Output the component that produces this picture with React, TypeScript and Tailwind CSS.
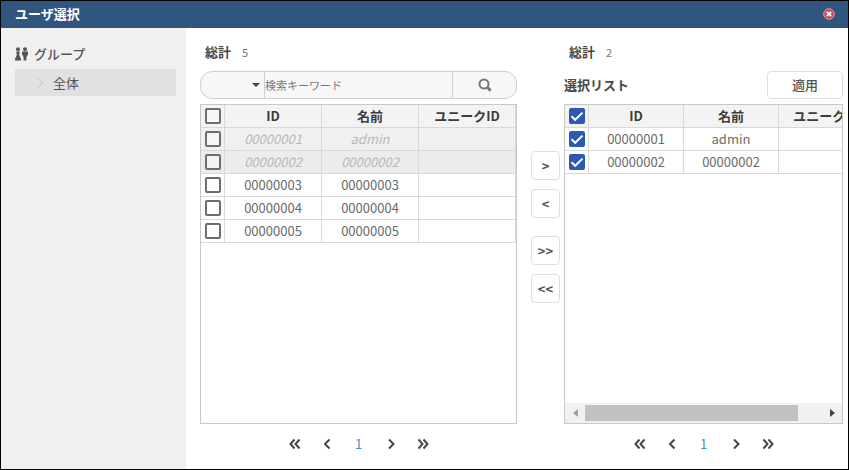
import { useState, type ReactNode } from "react";

type User = { id: string; name: string; unique?: string; assigned?: boolean };

const allUsers: User[] = [
  { id: "00000001", name: "admin", assigned: true },
  { id: "00000002", name: "00000002", assigned: true },
  { id: "00000003", name: "00000003" },
  { id: "00000004", name: "00000004" },
  { id: "00000005", name: "00000005" },
];

const selectedUsers: User[] = [
  { id: "00000001", name: "admin" },
  { id: "00000002", name: "00000002" },
];

function Checkbox({ label, initial }: { label: string; initial: boolean }) {
  const [checked, setChecked] = useState(initial);
  return (
    <span className="grid place-items-center">
      <input
        type="checkbox"
        aria-label={label}
        checked={checked}
        onChange={() => setChecked(!checked)}
        className="peer col-start-1 row-start-1 size-4 appearance-none rounded-xs border-2 border-[#6e6e6e] bg-white/40 checked:border-[#2a5ab4] checked:bg-[#2a5ab4]"
      />
      <svg
        viewBox="0 0 16 16"
        className="pointer-events-none col-start-1 row-start-1 hidden size-4 peer-checked:block"
        fill="none"
        stroke="#fff"
        strokeWidth="2"
      >
        <path d="M2.5 8.2 6.2 11.8 13.5 4.6" />
      </svg>
    </span>
  );
}

function UserTable({ users, checked, className }: { users: User[]; checked: boolean; className: string }) {
  return (
    <table className={`table-fixed border-separate border-spacing-0 text-center ${className}`}>
      <colgroup>
        <col className="w-6" />
        <col />
        <col />
        <col />
      </colgroup>
      <thead>
        <tr className="h-[23px] bg-[#f3f3f3] text-[#3c3c3c]">
          <th className="border-r border-b border-[#d9d9d9] p-0">
            <Checkbox label="すべて選択" initial={checked} />
          </th>
          <th className="border-r border-b border-[#d9d9d9] p-0 font-bold">ID</th>
          <th className="border-r border-b border-[#d9d9d9] p-0 font-bold">名前</th>
          <th className="border-r border-b border-[#d9d9d9] p-0 font-bold whitespace-nowrap">ユニークID</th>
        </tr>
      </thead>
      <tbody>
        {users.map((u) => (
          <tr
            key={u.id}
            className={`h-[23px] ${
              u.assigned ? "text-[#b8b8b8] italic odd:bg-[#f1f0f0] even:bg-[#ececec]" : "bg-white text-[#6a6a6a]"
            }`}
          >
            <td className="border-r border-b border-[#d9d9d9] p-0">
              <Checkbox label={u.id} initial={checked} />
            </td>
            <td className="border-r border-b border-[#d9d9d9] p-0">{u.id}</td>
            <td className="border-r border-b border-[#d9d9d9] p-0">{u.name}</td>
            <td className="border-r border-b border-[#d9d9d9] p-0">{u.unique}</td>
          </tr>
        ))}
      </tbody>
    </table>
  );
}

function PageButton({ label, d }: { label: string; d: string }) {
  return (
    <button type="button" aria-label={label} className="grid size-8 place-items-center text-[#484848]">
      <svg viewBox="0 0 12 12" className="size-3" fill="none" stroke="currentColor" strokeWidth="2">
        <path d={d} />
      </svg>
    </button>
  );
}

function Pager() {
  return (
    <nav className="mt-1 flex h-8 shrink-0 items-center justify-center">
      <PageButton label="最初" d="M5.500 1.500 1.500 6 5.500 10.500M10.500 1.500 6.500 6 10.500 10.500" />
      <PageButton label="前へ" d="M8.500 1.500 4 6 8.500 10.500" />
      <button type="button" aria-current="page" className="size-8 text-[#3f92c6]">
        1
      </button>
      <PageButton label="次へ" d="M4 1.500 8.500 6 4 10.500" />
      <PageButton label="最後" d="M1.500 1.500 5.500 6 1.500 10.500M6.500 1.500 10.500 6 6.500 10.500" />
    </nav>
  );
}

function Total({ count }: { count: number }) {
  return (
    <p className="flex h-5 items-center gap-[11px] pl-[5px] text-[#484848]">
      <span className="font-bold">総計</span>
      <span className="text-[11px] text-[#777]">{count}</span>
    </p>
  );
}

function MoveButton({ label, children, className = "" }: { label: string; children: ReactNode; className?: string }) {
  return (
    <button
      type="button"
      aria-label={label}
      className={`h-[29px] w-[29px] rounded border border-[#dedede] bg-white font-bold text-[#555] ${className}`}
    >
      {children}
    </button>
  );
}

export default function App() {
  return (
    <div className="flex h-screen flex-col border border-black bg-white font-['Noto_Sans_CJK_JP',sans-serif] text-[13px] leading-5 text-[#555]">
      <header className="flex h-[27px] shrink-0 items-center justify-between bg-[#30557f] pr-[13px] pb-px pl-[14px] text-white">
        <h1 className="font-bold">ユーザ選択</h1>
        <button type="button" aria-label="閉じる">
          <svg viewBox="0 0 12 12" className="size-3">
            <circle cx="6" cy="6" r="5.3" fill="#cf4a50" stroke="#dd9aa2" strokeWidth="1" />
            <path d="M3.8 3.8 8.2 8.2M8.2 3.8 3.8 8.2" stroke="#fff" strokeWidth="1.8" />
          </svg>
        </button>
      </header>

      <div className="flex min-h-0 flex-1">
        <aside className="w-[185px] shrink-0 bg-[#f1f0ef] pt-4 pr-[10px] pl-[14px]">
          <h2 className="flex items-center gap-[6px] font-medium">
            <svg viewBox="0 0 13 14" className="h-[14px] w-[13px]" fill="#555">
              <circle cx="3" cy="2.3" r="2" />
              <path d="M1.2 4.6h3.6L4.2 8 6 12v1.5H0V12l1.8-4z" />
              <circle cx="10" cy="2.3" r="2" />
              <path d="M7 4.6h6v2.6l-1.6 3v3.3H8.6v-3.3L7 7.200z" />
            </svg>
            <span>グループ</span>
          </h2>
          <a href="#all" className="mt-[5px] flex h-[27px] items-center gap-2 bg-[#e2e1e0] pl-5">
            <svg viewBox="0 0 10 12" className="h-3 w-[10px]" fill="none" stroke="#bdbdbd" strokeWidth="1">
              <path d="M3 1.500 7.500 6 3 10.500" />
            </svg>
            全体
          </a>
        </aside>

        <main className="flex min-w-0 flex-1 pt-[14px] pr-[5px] pb-[9px] pl-[14px]">
          <section className="flex min-w-0 flex-[317] flex-col">
            <Total count={5} />
            <form
              className="mt-[9px] mb-[5px] flex h-7 shrink-0 overflow-hidden rounded-xl border border-[#cfcfcf] bg-[#f7f7f7]"
              onSubmit={(e) => e.preventDefault()}
            >
              <label className="relative w-16 shrink-0 border-r border-[#cfcfcf]">
                <select aria-label="検索条件" className="h-full w-full appearance-none bg-transparent pl-3">
                  <option value=""></option>
                  <option value="id">ID</option>
                  <option value="name">名前</option>
                </select>
                <svg viewBox="0 0 8 4" className="pointer-events-none absolute top-[11px] right-1 h-1 w-2" fill="#444">
                  <path d="M0 0h8L4 4z" />
                </svg>
              </label>
              <input
                type="text"
                aria-label="検索キーワード"
                placeholder="検索キーワード"
                className="min-w-0 flex-1 text-[11px] placeholder:text-[#777]"
              />
              <button
                type="submit"
                aria-label="検索"
                className="grid w-16 shrink-0 place-items-center border-l border-[#cfcfcf]"
              >
                <svg viewBox="0 0 14 14" className="size-[14px]" fill="none" stroke="#777">
                  <circle cx="6" cy="6" r="4.500" strokeWidth="2" />
                  <path d="M9.300 9.300 12.700 12.700" strokeWidth="2.800" />
                </svg>
              </button>
            </form>
            <div className="min-h-0 flex-1 overflow-hidden border border-[#c8c8c8]">
              <UserTable users={allUsers} checked={false} className="w-full" />
            </div>
            <Pager />
          </section>

          <div className="mr-1 ml-[14px] flex shrink-0 flex-col pt-[109px]">
            <MoveButton label="追加">&gt;</MoveButton>
            <MoveButton label="削除" className="mt-[9px]">&lt;</MoveButton>
            <MoveButton label="すべて追加" className="mt-[18px]">&gt;&gt;</MoveButton>
            <MoveButton label="すべて削除" className="mt-[9px]">&lt;&lt;</MoveButton>
          </div>

          <section className="flex min-w-0 flex-[279] flex-col">
            <Total count={2} />
            <div className="mt-[9px] mb-[5px] flex h-7 shrink-0 items-center justify-between">
              <h2 className="font-bold text-[#484848]">選択リスト</h2>
              <button type="button" className="h-7 w-[76px] rounded border border-[#dedede] bg-white font-medium">
                適用
              </button>
            </div>
            <div className="flex min-h-0 flex-1 flex-col border border-[#c8c8c8]">
              <div className="min-h-0 flex-1 overflow-hidden">
                <UserTable users={selectedUsers} checked={true} className="w-[309px] min-w-full" />
              </div>
              <div className="flex h-5 shrink-0 items-center bg-[#f1f1f1]">
                <button type="button" aria-label="左へ" className="grid w-5 place-items-center">
                  <svg viewBox="0 0 5 8" className="h-2 w-[5px]" fill="#a0a0a0">
                    <path d="M5 0v8L0 4z" />
                  </svg>
                </button>
                <div className="h-4 flex-1">
                  <div className="h-full w-9/10 bg-[#c1c1c1]" />
                </div>
                <button type="button" aria-label="右へ" className="grid w-5 place-items-center">
                  <svg viewBox="0 0 5 8" className="h-2 w-[5px]" fill="#444">
                    <path d="M0 0v8l5-4z" />
                  </svg>
                </button>
              </div>
            </div>
            <Pager />
          </section>
        </main>
      </div>
    </div>
  );
}
